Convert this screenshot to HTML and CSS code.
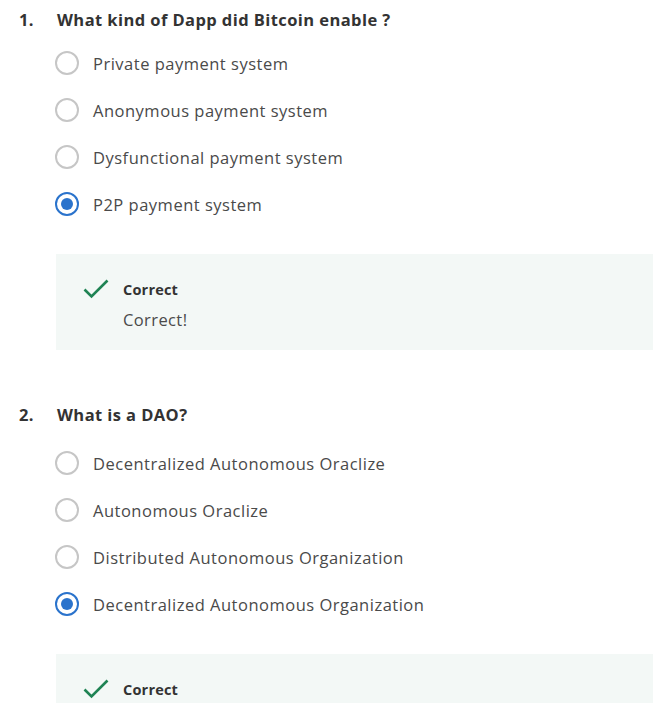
FILE: index.html
```html
<!DOCTYPE html>
<html>
<head>
<meta charset="utf-8">
<link rel="stylesheet" href="styles.css">
</head>
<body>
<div class="quiz">
  <section class="question">
    <div class="q-head"><span class="q-num">1.</span><span class="q-text">What kind of Dapp did Bitcoin enable ?</span></div>
    <ul class="options">
      <li class="option"><span class="radio"></span><span class="opt-text">Private payment system</span></li>
      <li class="option"><span class="radio"></span><span class="opt-text">Anonymous payment system</span></li>
      <li class="option"><span class="radio"></span><span class="opt-text">Dysfunctional payment system</span></li>
      <li class="option"><span class="radio checked"></span><span class="opt-text">P2P payment system</span></li>
    </ul>
    <div class="feedback">
      <svg class="check" width="26" height="20" viewBox="0 0 26 20"><path d="M1.5 10.5 L8.5 17.5 L24.5 1.5" fill="none" stroke="#1f8354" stroke-width="2.6"/></svg>
      <div class="fb-body">
        <div class="fb-title">Correct</div>
        <div class="fb-text">Correct!</div>
      </div>
    </div>
  </section>
  <section class="question">
    <div class="q-head"><span class="q-num">2.</span><span class="q-text">What is a DAO?</span></div>
    <ul class="options options-2">
      <li class="option"><span class="radio"></span><span class="opt-text">Decentralized Autonomous Oraclize</span></li>
      <li class="option"><span class="radio"></span><span class="opt-text">Autonomous Oraclize</span></li>
      <li class="option"><span class="radio"></span><span class="opt-text">Distributed Autonomous Organization</span></li>
      <li class="option"><span class="radio checked"></span><span class="opt-text">Decentralized Autonomous Organization</span></li>
    </ul>
    <div class="feedback">
      <svg class="check" width="26" height="20" viewBox="0 0 26 20"><path d="M1.5 10.5 L8.5 17.5 L24.5 1.5" fill="none" stroke="#1f8354" stroke-width="2.6"/></svg>
      <div class="fb-body">
        <div class="fb-title">Correct</div>
      </div>
    </div>
  </section>
</div>
</body>
</html>
```

FILE: styles.css
```css
html, body {
  margin: 0;
  padding: 0;
  background: #ffffff;
}
body {
  font-family: "Open Sans", "Liberation Sans", sans-serif;
  color: #333333;
  overflow: hidden;
}
.quiz {
  display: flex;
  flex-direction: column;
  padding-top: 8px;
  gap: 53px;
}
.question {
  display: flex;
  flex-direction: column;
}
.q-head {
  display: flex;
  padding-left: 19px;
  font-size: 16.5px;
  line-height: 24px;
  font-weight: 700;
  letter-spacing: 0.42px;
  color: #333333;
}
.q-num {
  width: 38px;
}
.options {
  list-style: none;
  margin: 7.5px 0 0 0;
  padding: 0 0 0 55px;
}
.options-2 {
  margin-top: 12.5px;
}
.option {
  display: flex;
  align-items: center;
  height: 47px;
  font-size: 16.5px;
  letter-spacing: 0.5px;
  color: #4a4a4a;
}
.radio {
  box-sizing: border-box;
  width: 24px;
  height: 24px;
  border: 2px solid #c6c6c6;
  border-radius: 50%;
  margin-right: 14px;
  flex: none;
  position: relative;
}
.radio.checked {
  border: 2px solid #2a73cc;
}
.radio.checked::after {
  content: "";
  position: absolute;
  left: 4px;
  top: 4px;
  width: 12px;
  height: 12px;
  border-radius: 50%;
  background: #2a73cc;
}
.feedback {
  margin: 26.5px 0 0 56px;
  background: #f3f8f6;
  height: 96px;
  box-sizing: border-box;
  display: flex;
  align-items: flex-start;
  padding: 24px 0 0 27px;
}
.check {
  flex: none;
  margin-top: 1px;
}
.fb-body {
  margin-left: 14px;
}
.fb-title {
  font-size: 14.5px;
  font-weight: 700;
  line-height: 24px;
  letter-spacing: 0.2px;
  color: #333333;
}
.fb-text {
  font-size: 16.5px;
  line-height: 24px;
  margin-top: 6px;
  letter-spacing: 0.4px;
  color: #4a4a4a;
}
```
